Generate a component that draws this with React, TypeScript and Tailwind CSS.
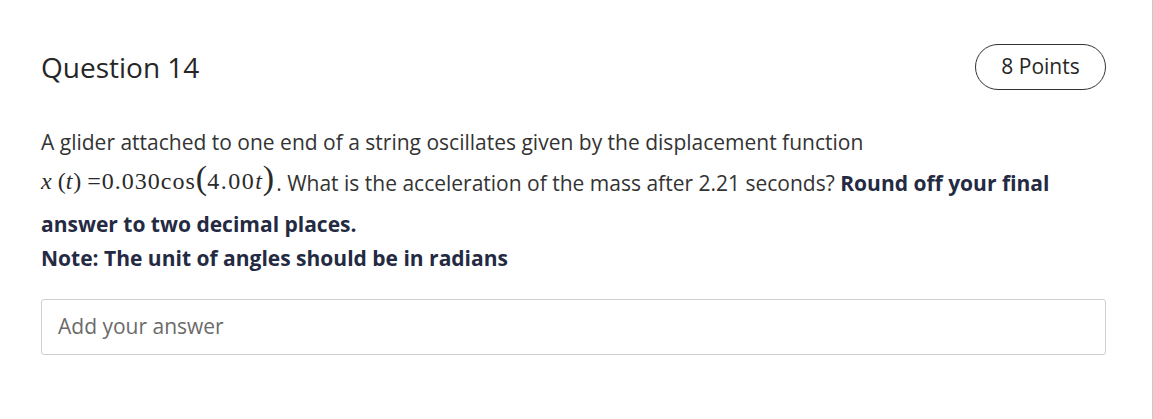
export default function App() {
  return (
    <div className="h-[419px] w-full bg-white border-r border-[#c8c8c8] font-['Open_Sans',sans-serif] text-[#333333]">
      {/* Header */}
      <div className="flex items-center justify-between pl-[41px] pr-[46px] pt-[44px]">
        <h2 className="text-[28px] text-[#262626]">Question 14</h2>
        <div className="h-[46px] w-[131px] rounded-full border border-[#333333] flex items-center justify-center text-[21px] text-[#262626]">
          8 Points
        </div>
      </div>

      {/* Question body */}
      <div className="pl-[41px] pr-[46px] mt-[36px] text-[21px]">
        <div className="h-[34px] flex items-center">
          A glider attached to one end of a string oscillates given by the displacement function
        </div>
        <div className="h-[48px] flex items-end pb-[13px]">
          <span className="font-['Liberation_Serif',serif] text-[24px] leading-none text-[#2a2a2a] flex items-baseline mr-[2px]">
            <i>x</i>
            <span className="ml-[6px]">(</span>
            <i>t</i>
            <span className="ml-[1px]">)</span>
            <span className="ml-[6px] tracking-[1px]">=0.030cos</span>
            <span className="text-[34px] leading-none font-light">(</span>
            <span className="tracking-[1.5px]">4.00</span>
            <i>t</i>
            <span className="text-[34px] leading-none font-light ml-[1px]">)</span>
          </span>
          <span className="leading-none mb-[1px]">
            . What is the acceleration of the mass after 2.21 seconds?{' '}
            <b className="text-[#242a42]">Round off your final</b>
          </span>
        </div>
        <div className="h-[34px] flex items-center font-bold text-[#242a42]">answer to two decimal places.</div>
        <div className="h-[34px] flex items-center font-bold text-[#242a42]">Note: The unit of angles should be in radians</div>
      </div>

      {/* Answer input */}
      <div className="pl-[41px] pr-[46px] mt-[23px]">
        <div className="h-[56px] rounded-[3px] border border-[#cfcfcf] flex items-center px-[16px] text-[21px] text-[#6b6b6b]">
          Add your answer
        </div>
      </div>
    </div>
  )
}
